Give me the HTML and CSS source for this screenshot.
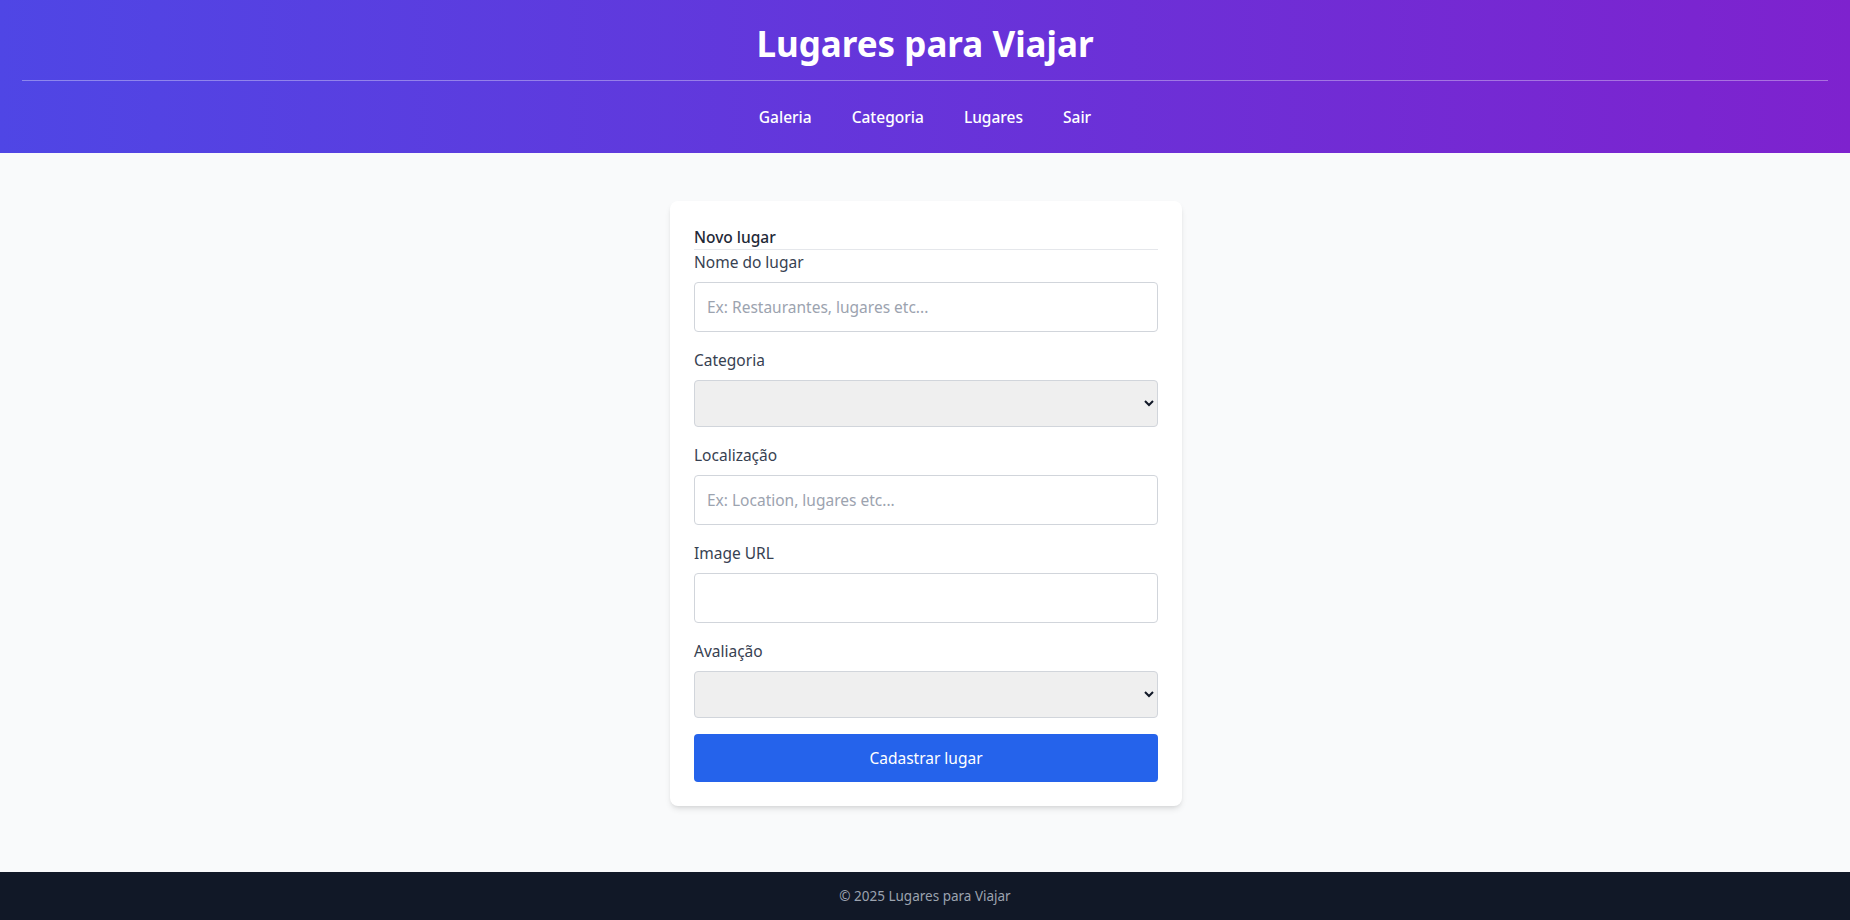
FILE: index.html
```html
<!DOCTYPE html>
<html lang="pt-BR">
<head>
<meta charset="utf-8">
<title>Lugares para Viajar</title>
<link rel="stylesheet" href="styles.css">
</head>
<body>
<div class="page">
  <header class="site-header">
    <h1 class="site-title">Lugares para Viajar</h1>
    <hr class="header-divider">
    <nav class="site-nav">
      <a href="#">Galeria</a>
      <a href="#">Categoria</a>
      <a href="#">Lugares</a>
      <a href="#">Sair</a>
    </nav>
  </header>
  <main class="main">
    <form class="card">
      <div class="card-title">Novo lugar</div>
      <div class="field">
        <label class="label">Nome do lugar</label>
        <input class="control" type="text" placeholder="Ex: Restaurantes, lugares etc...">
      </div>
      <div class="field">
        <label class="label">Categoria</label>
        <select class="control select"><option></option></select>
      </div>
      <div class="field">
        <label class="label">Localização</label>
        <input class="control" type="text" placeholder="Ex: Location, lugares etc...">
      </div>
      <div class="field">
        <label class="label">Image URL</label>
        <input class="control" type="text">
      </div>
      <div class="field">
        <label class="label">Avaliação</label>
        <select class="control select"><option></option></select>
      </div>
      <button type="button" class="btn">Cadastrar lugar</button>
    </form>
  </main>
  <footer class="site-footer">© 2025 Lugares para Viajar</footer>
</div>
</body>
</html>
```
FILE: styles.css
```css
* { box-sizing: border-box; }
html, body { margin: 0; padding: 0; }
body {
  font-family: "Noto Sans", "Open Sans", sans-serif;
  background: #f9fafb;
  color: #374151;
}
.page {
  min-height: 100vh;
  display: flex;
  flex-direction: column;
}
.site-header {
  background: linear-gradient(to right, #4f46e5, #7e22ce);
  color: #fff;
  padding: 24px 22px;
  text-align: center;
}
.site-title {
  margin: 0;
  font-size: 35px;
  line-height: 40px;
  font-weight: 700;
}
.header-divider {
  margin: 16px 0 0;
  border: 0;
  border-top: 1px solid rgba(255,255,255,0.35);
}
.site-nav {
  margin-top: 24px;
  display: flex;
  justify-content: center;
  gap: 40px;
  line-height: 24px;
}
.site-nav a {
  color: #fff;
  text-decoration: none;
  font-size: 15.5px;
  font-weight: 500;
}
.main {
  flex: 1;
  display: flex;
  justify-content: center;
  align-items: flex-start;
  padding: 48px 0 48px 2px;
}
.card {
  width: 512px;
  background: #fff;
  border-radius: 8px;
  box-shadow: 0 4px 6px -1px rgba(0,0,0,0.1), 0 2px 4px -2px rgba(0,0,0,0.1);
  padding: 24px;
}
.card-title {
  font-size: 15.5px;
  line-height: 24px;
  font-weight: 500;
  color: #1f2937;
  border-bottom: 1px solid #e5e7eb;
}
.field { margin-bottom: 16px; }
.label {
  display: block;
  font-size: 15.5px;
  line-height: 24px;
  margin-bottom: 8px;
  color: #374151;
}
.control {
  display: block;
  width: 100%;
  height: 50px;
  margin: 0;
  padding: 12px;
  font-family: inherit;
  font-size: 15.5px;
  line-height: 24px;
  color: #111827;
  background: #fff;
  border: 1px solid #d1d5db;
  border-radius: 4px;
}
.control::placeholder { color: #9ca3af; }
.select {
  height: 47px;
  padding: 10px 8px;
  background-color: #efefef;
}
.btn {
  display: block;
  width: 100%;
  height: 48px;
  border: 0;
  border-radius: 4px;
  background: #2563eb;
  color: #fff;
  font-family: inherit;
  font-size: 15.5px;
}
.site-footer {
  height: 48px;
  background: #111827;
  color: #9ca3af;
  font-size: 13.5px;
  display: flex;
  align-items: center;
  justify-content: center;
}
```
